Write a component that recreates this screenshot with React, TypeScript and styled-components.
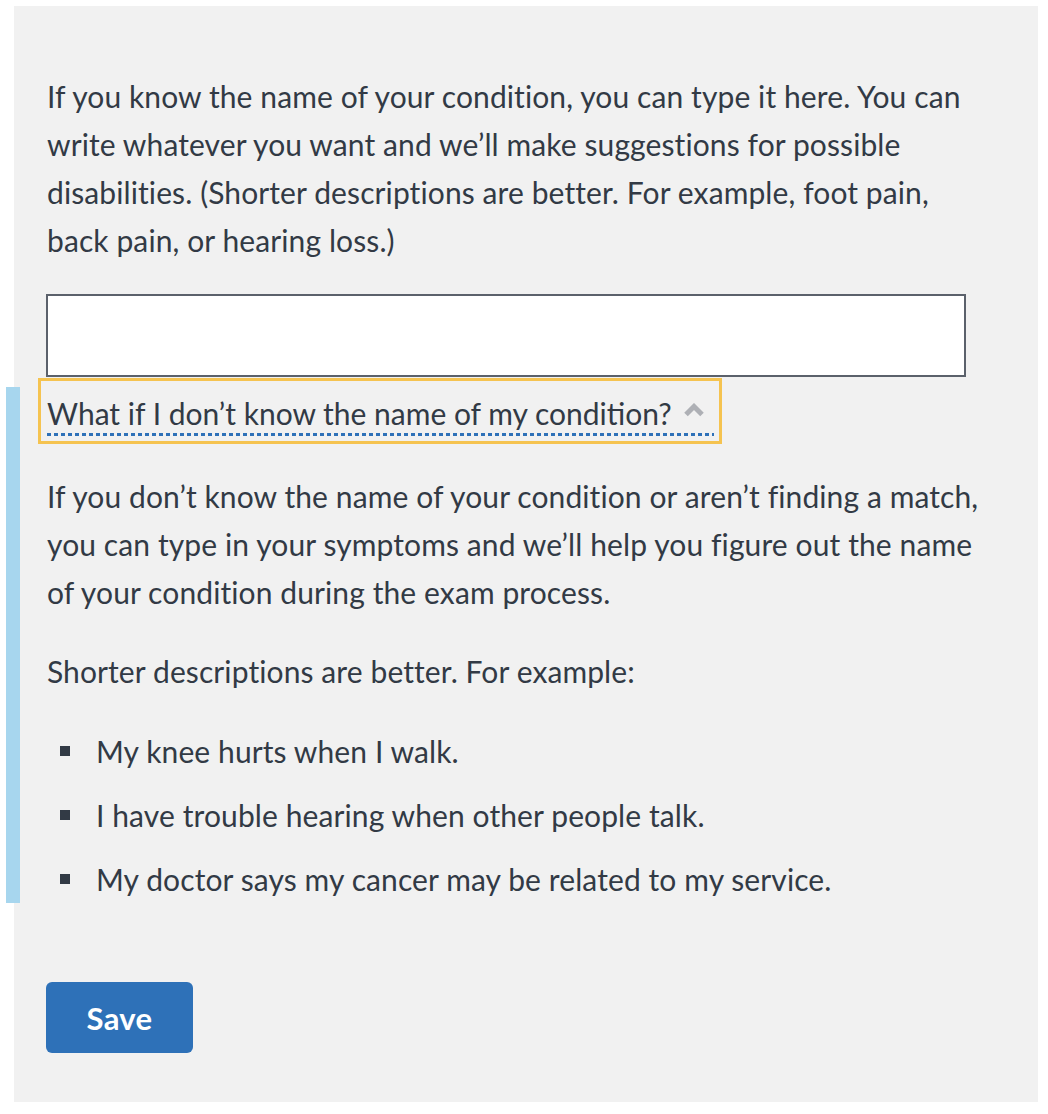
import React from "react";
import styled, { createGlobalStyle } from "styled-components";

const Global = createGlobalStyle`
  html, body { margin: 0; padding: 0; background: #ffffff; }
  body {
    font-family: Lato, "Noto Sans", sans-serif;
    color: #323a45;
    letter-spacing: 0.1px;
    -webkit-font-smoothing: antialiased;
  }
`;

const Panel = styled.div`
  margin: 6px 10px 0 14px;
  background: #f1f1f1;
  padding: 66px 33px 49px 33px;
  font-size: 30px;
  line-height: 48px;
`;

const Para = styled.p<{ $gap?: number }>`
  margin: ${(p) => p.$gap ?? 0}px 0 0 0;
  font-size: 30px;
  line-height: 48px;
`;

const Input = styled.input`
  display: block;
  box-sizing: border-box;
  margin-top: 30px;
  width: 920px;
  height: 83px;
  margin-left: -1px;
  border: 2px solid #5b616b;
  background: #ffffff;
  font: inherit;
  padding: 0 12px;
  outline: none;
`;

const Reveal = styled.div`
  margin: 10px 0 0 -41px;
  border-left: 14px solid #a7d6ee;
  padding-left: 27px;
`;

const Toggle = styled.button`
  display: inline-flex;
  align-items: flex-start;
  margin: -6px 0 0 -6px;
  padding: 12px 5px 5px 6px;
  border: none;
  background: transparent;
  outline: 3px solid #f5c350;
  font: inherit;
  line-height: 40px;
  color: #323a45;
  cursor: pointer;
`;

const ToggleLabel = styled.span`
  display: inline-flex;
  align-items: center;
  gap: 11px;
  font-size: 30px;
  line-height: 40px;
  padding-bottom: 3px;
  background-image: repeating-linear-gradient(
    to right,
    #2e71b8 0,
    #2e71b8 4px,
    transparent 4px,
    transparent 7px
  );
  background-size: 100% 3px;
  background-position: left bottom;
  background-repeat: no-repeat;
`;

const Chevron = styled.svg`
  width: 22px;
  height: 14px;
  margin: -6px 9px 0 0;
`;

const List = styled.ul`
  list-style: none;
  margin: 32px 0 0 0;
  padding: 0;
  display: flex;
  flex-direction: column;
  gap: 16px;
`;

const Item = styled.li`
  display: flex;
  align-items: center;
  font-size: 30px;
  line-height: 48px;
  &::before {
    content: "";
    flex: none;
    width: 10px;
    height: 10px;
    background: #323a45;
    margin: 0 26px 0 13px;
  }
`;

const SaveButton = styled.button`
  display: block;
  margin: 79px 0 0 -1px;
  width: 147px;
  height: 71px;
  border: none;
  border-radius: 6px;
  background: #2e71b8;
  color: #ffffff;
  font-family: Lato, "Noto Sans", sans-serif;
  font-weight: 700;
  font-size: 31px;
  letter-spacing: 0.3px;
  cursor: pointer;
`;

export default function App() {
  return (
    <>
      <Global />
      <Panel>
        <Para>
          If you know the name of your condition, you can type it here. You can
          <br />
          write whatever you want and we’ll make suggestions for possible
          <br />
          disabilities. (Shorter descriptions are better. For example, foot pain,
          <br />
          back pain, or hearing loss.)
        </Para>
        <Input type="text" aria-label="Condition" />
        <Reveal>
          <Toggle type="button" aria-expanded="true">
            <ToggleLabel>
              What if I don’t know the name of my condition?
              <Chevron viewBox="0 0 22 14" aria-hidden="true">
                <path d="M3 11.5 L11 3.5 L19 11.5" fill="none" stroke="#aeb0b5" strokeWidth="5" strokeLinecap="butt" strokeLinejoin="miter" />
              </Chevron>
            </ToggleLabel>
          </Toggle>
          <Para $gap={31}>
            If you don’t know the name of your condition or aren’t finding a match,
            <br />
            you can type in your symptoms and we’ll help you figure out the name
            <br />
            of your condition during the exam process.
          </Para>
          <Para $gap={31}>Shorter descriptions are better. For example:</Para>
          <List>
            <Item>My knee hurts when I walk.</Item>
            <Item>I have trouble hearing when other people talk.</Item>
            <Item>My doctor says my cancer may be related to my service.</Item>
          </List>
        </Reveal>
        <SaveButton type="button">Save</SaveButton>
      </Panel>
    </>
  );
}
